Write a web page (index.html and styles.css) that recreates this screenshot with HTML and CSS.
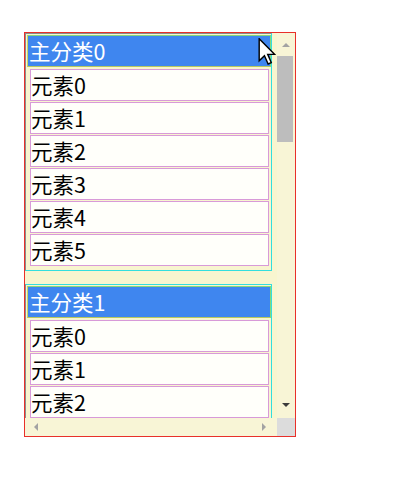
FILE: index.html
```
<!DOCTYPE html>
<html lang="zh-CN">
<head>
<meta charset="utf-8">
<title>分类列表</title>
<link rel="stylesheet" href="styles.css">
</head>
<body>
<div class="page">
  <div class="frame">
    <div class="viewport">
      <section class="group">
        <div class="group-title">主分类0</div>
        <div class="item">元素0</div><div class="item">元素1</div><div class="item">元素2</div><div class="item">元素3</div><div class="item">元素4</div><div class="item">元素5</div>
      </section>
      <section class="group">
        <div class="group-title">主分类1</div>
        <div class="item">元素0</div><div class="item">元素1</div><div class="item">元素2</div><div class="item">元素3</div><div class="item">元素4</div><div class="item">元素5</div>
      </section>
    </div>
    <div class="vbar">
      <div class="sb-btn"><span class="arrow arrow-up"></span></div>
      <div class="vtrack"><div class="vthumb"></div></div>
      <div class="sb-btn sb-btn-down"><span class="arrow arrow-down"></span></div>
    </div>
    <div class="hbar">
      <div class="sb-btn sb-btn-left"><span class="arrow arrow-left"></span></div>
      <div class="htrack"></div>
      <div class="sb-btn sb-btn-right"><span class="arrow arrow-right"></span></div>
    </div>
    <div class="corner"></div>
  </div>
  <svg class="cursor" width="18" height="27" viewBox="0 0 12 19" aria-hidden="true">
    <path d="M0.5 0.5 L0.5 16 L4.2 12.4 L6.8 18.3 L9 17.3 L6.5 11.5 L11.3 11.5 Z" fill="#fff" stroke="#000" stroke-width="1" stroke-linejoin="miter"/>
  </svg>
</div>
</body>
</html>
```
FILE: styles.css
```
* { box-sizing: border-box; }

html, body {
  margin: 0;
  background: #ffffff;
}

.page {
  position: relative;
  padding: 32px 0 0 24px;
  font-family: "Noto Sans CJK SC", "Noto Sans", sans-serif;
}

.frame {
  width: 272px;
  height: 405px;
  border: 1px solid #e8302a;
  background: #f8f5cf;
  display: grid;
  grid-template-columns: 1fr 18px;
  grid-template-rows: 1fr 18px;
}

.viewport {
  overflow: hidden;
  min-height: 0;
}

.group {
  width: 247px;
  border: 1px solid #33dede;
  border-left-color: #8a8f8f;
  padding: 1px 0 3px 1px;
  margin-bottom: 13px;
}

.group:first-child {
  border-top-color: #8a8f8f;
}

.group-title {
  position: sticky;
  top: 0;
  height: 32px;
  margin-bottom: 2px;
  padding-left: 1px;
  background: #3f86ef;
  border: 1px solid #86d87a;
  border-left-color: #c8d860;
  border-bottom-color: #b8c860;
  color: #ffffff;
  font-size: 21.5px;
  line-height: 30px;
  white-space: nowrap;
}

.item {
  height: 32px;
  margin: 0 2px 1px 3px;
  border: 1px solid #d89ad8;
  background: #fffffa;
  color: #000000;
  font-size: 21.5px;
  line-height: 30px;
  white-space: nowrap;
}

.cursor {
  position: absolute;
  left: 258px;
  top: 38px;
}

/* drawn scrollbars */
.vbar {
  display: flex;
  flex-direction: column;
  background: #f8f5d6;
  min-height: 0;
}

.hbar {
  display: flex;
  background: #f8f5d6;
}

.corner {
  background: #dcdcdc;
}

.sb-btn {
  flex: 0 0 21px;
  display: flex;
  align-items: center;
  justify-content: center;
}

.sb-btn-down { align-items: flex-start; padding-top: 6px; }
.sb-btn-left { justify-content: flex-start; padding-left: 9px; }
.sb-btn-right { justify-content: flex-end; padding-right: 11px; }

.vtrack {
  flex: 1;
  padding: 2px 2px 0 0;
}

.vthumb {
  height: 86px;
  background: #bdbdbd;
}

.htrack {
  flex: 1;
}

.arrow {
  display: block;
  width: 0;
  height: 0;
  border-style: solid;
}

.arrow-up {
  border-width: 0 4px 4px 4px;
  border-color: transparent transparent #a3a3a3 transparent;
  margin-top: 2px;
}

.arrow-down {
  border-width: 4px 4px 0 4px;
  border-color: #3c3c3c transparent transparent transparent;
}

.arrow-left {
  border-width: 4px 4px 4px 0;
  border-color: transparent #a3a3a3 transparent transparent;
}

.arrow-right {
  border-width: 4px 0 4px 4px;
  border-color: transparent transparent transparent #a3a3a3;
}
```
